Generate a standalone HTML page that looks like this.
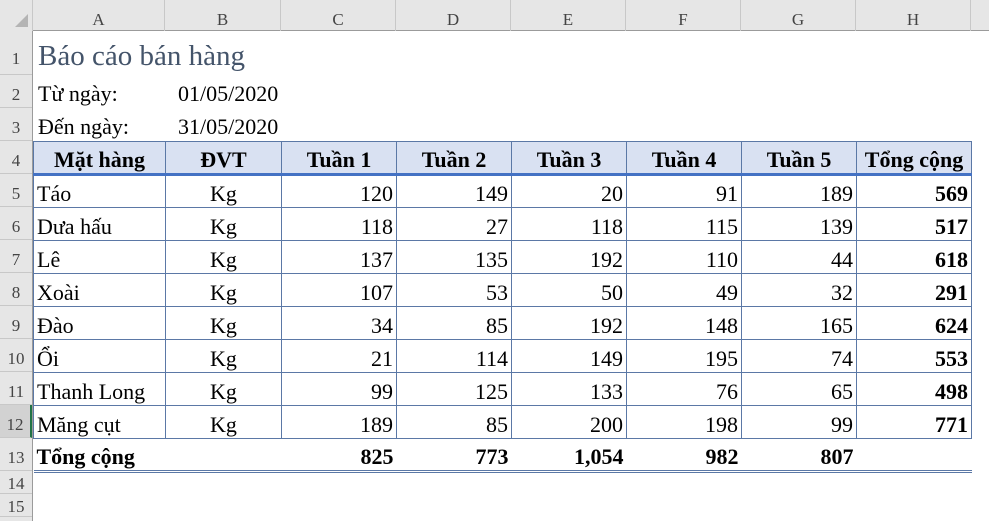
<!DOCTYPE html>
<html><head><meta charset="utf-8"><style>
*{margin:0;padding:0;box-sizing:border-box}
body{width:989px;height:521px;overflow:hidden;background:#fff;font-family:"Liberation Serif",serif;position:relative}
.colh{position:absolute;top:0;left:0;width:989px;height:31px;background:#e6e6e6;border-bottom:1px solid #9b9b9b}
.colh div{position:absolute;top:0;height:31px;line-height:40px;text-align:center;font-size:17px;color:#444;border-right:1px solid #c8c8c8}
.rowh{position:absolute;left:0;top:31px;width:33px;height:490px;background:#e6e6e6;border-right:1px solid #9b9b9b}
.rowh div{position:absolute;left:0;width:32px;text-align:center;font-size:17px;color:#444;border-bottom:1px solid #c8c8c8}
.t{position:absolute;font-size:22px;color:#000;white-space:nowrap}
table{position:absolute;left:33px;top:141px;border-collapse:collapse;font-size:22px;table-layout:fixed}
td{height:33px;border:1px solid #5b78a6;padding:4px 3px 0;white-space:nowrap;line-height:27px;overflow:visible}
tr.h td{background:#d9e1f2;font-weight:bold;text-align:center;border-bottom:3px solid #4472c4;line-height:25px;padding-top:3px}
td.r{text-align:right}td.c{text-align:center}td.b{font-weight:bold}
tr.tot td{border:none;font-weight:bold;border-bottom:3px double #5b78a6;text-align:right}
</style></head><body>
<div class="colh">
<div style="left:0;width:33px;background:#e6e6e6"><svg width="33" height="31"><polygon points="28,14 28,27 15,27" fill="#b4b4b4"/></svg></div>
<div style="left:33px;width:132px">A</div>
<div style="left:165px;width:116px">B</div>
<div style="left:281px;width:115px">C</div>
<div style="left:396px;width:115px">D</div>
<div style="left:511px;width:115px">E</div>
<div style="left:626px;width:115px">F</div>
<div style="left:741px;width:115px">G</div>
<div style="left:856px;width:115px">H</div>
</div>
<div class="rowh">
<div style="top:0;height:44px;line-height:56px">1</div>
<div style="top:44px;height:33px;line-height:40px">2</div>
<div style="top:77px;height:33px;line-height:40px">3</div>
<div style="top:110px;height:33px;line-height:40px">4</div>
<div style="top:143px;height:33px;line-height:40px">5</div>
<div style="top:176px;height:33px;line-height:40px">6</div>
<div style="top:209px;height:33px;line-height:40px">7</div>
<div style="top:242px;height:33px;line-height:40px">8</div>
<div style="top:275px;height:33px;line-height:40px">9</div>
<div style="top:308px;height:33px;line-height:40px">10</div>
<div style="top:341px;height:33px;line-height:40px">11</div>
<div style="top:374px;height:33px;line-height:40px;background:#d2d2d2;border-right:2px solid #217346">12</div>
<div style="top:407px;height:33px;line-height:40px">13</div>
<div style="top:440px;height:23px;line-height:26px">14</div>
<div style="top:463px;height:23px;line-height:26px">15</div>
</div>
<div class="t" style="left:38px;top:40px;font-size:29px;color:#44546a">Báo cáo bán hàng</div>
<div class="t" style="left:38px;top:81px">Từ ngày:</div>
<div class="t" style="left:178px;top:81px">01/05/2020</div>
<div class="t" style="left:38px;top:114px">Đến ngày:</div>
<div class="t" style="left:178px;top:114px">31/05/2020</div>
<table>
<colgroup><col style="width:132px"><col style="width:116px"><col style="width:115px"><col style="width:115px"><col style="width:115px"><col style="width:115px"><col style="width:115px"><col style="width:115px"></colgroup>
<tr class="h"><td>Mặt hàng</td><td>ĐVT</td><td>Tuần 1</td><td>Tuần 2</td><td>Tuần 3</td><td>Tuần 4</td><td>Tuần 5</td><td>Tổng cộng</td></tr>
<tr><td>Táo</td><td class="c">Kg</td><td class="r">120</td><td class="r">149</td><td class="r">20</td><td class="r">91</td><td class="r">189</td><td class="r b">569</td></tr>
<tr><td>Dưa hấu</td><td class="c">Kg</td><td class="r">118</td><td class="r">27</td><td class="r">118</td><td class="r">115</td><td class="r">139</td><td class="r b">517</td></tr>
<tr><td>Lê</td><td class="c">Kg</td><td class="r">137</td><td class="r">135</td><td class="r">192</td><td class="r">110</td><td class="r">44</td><td class="r b">618</td></tr>
<tr><td>Xoài</td><td class="c">Kg</td><td class="r">107</td><td class="r">53</td><td class="r">50</td><td class="r">49</td><td class="r">32</td><td class="r b">291</td></tr>
<tr><td>Đào</td><td class="c">Kg</td><td class="r">34</td><td class="r">85</td><td class="r">192</td><td class="r">148</td><td class="r">165</td><td class="r b">624</td></tr>
<tr><td>Ổi</td><td class="c">Kg</td><td class="r">21</td><td class="r">114</td><td class="r">149</td><td class="r">195</td><td class="r">74</td><td class="r b">553</td></tr>
<tr><td>Thanh Long</td><td class="c">Kg</td><td class="r">99</td><td class="r">125</td><td class="r">133</td><td class="r">76</td><td class="r">65</td><td class="r b">498</td></tr>
<tr><td>Măng cụt</td><td class="c">Kg</td><td class="r">189</td><td class="r">85</td><td class="r">200</td><td class="r">198</td><td class="r">99</td><td class="r b">771</td></tr>
<tr class="tot"><td style="text-align:left">Tổng cộng</td><td></td><td>825</td><td>773</td><td>1,054</td><td>982</td><td>807</td><td></td></tr>
</table>
</body></html>
